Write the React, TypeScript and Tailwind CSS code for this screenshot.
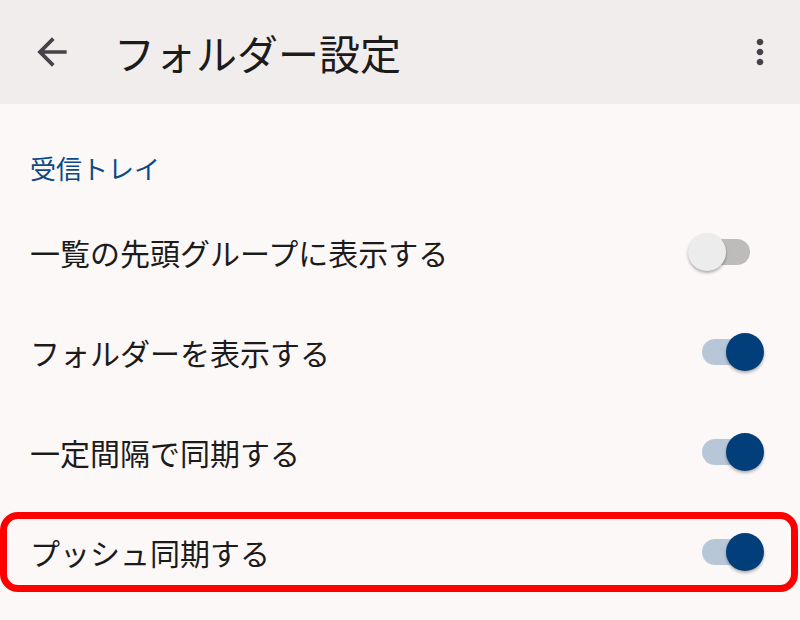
import React, { useState } from 'react';

const font = { fontFamily: '"Noto Sans CJK JP", "Noto Sans", sans-serif' };

interface Item {
  label: string;
  on: boolean;
  highlight?: boolean;
}

const initialItems: Item[] = [
  { label: '一覧の先頭グループに表示する', on: false },
  { label: 'フォルダーを表示する', on: true },
  { label: '一定間隔で同期する', on: true },
  { label: 'プッシュ同期する', on: true, highlight: true },
];

function Toggle({ on, onClick }: { on: boolean; onClick: () => void }) {
  return (
    <button type="button" onClick={onClick} className="relative h-[38px] w-[76px] shrink-0">
      <span
        className={`absolute left-[14px] top-[6px] h-[26px] w-[48px] rounded-full ${on ? 'bg-[#b7c7d8]' : 'bg-[#bdbcbb]'}`}
      />
      <span
        className={`absolute top-0 h-[38px] w-[38px] rounded-full shadow-[0_2px_3px_rgba(0,0,0,0.3)] ${on ? 'left-[38px] bg-[#023e7a]' : 'left-0 bg-[#ececec]'}`}
      />
    </button>
  );
}

export default function App() {
  const [items, setItems] = useState(initialItems);

  const toggle = (i: number) =>
    setItems((prev) => prev.map((it, idx) => (idx === i ? { ...it, on: !it.on } : it)));

  return (
    <div className="h-[620px] w-[800px] overflow-hidden bg-[#fcf8f8]" style={font}>
      {/* App bar */}
      <div className="flex h-[104px] items-center bg-[#f1eded] pl-[30px] pr-[20px]">
        <svg className="h-[44px] w-[44px] text-[#45424a]" viewBox="0 0 24 24" fill="currentColor">
          <path d="M20 11H7.83l5.59-5.59L12 4l-8 8 8 8 1.41-1.41L7.83 13H20v-2z" />
        </svg>
        <h1 className="ml-[40px] flex-1 text-[41px] leading-none text-[#1c1b1b]">フォルダー設定</h1>
        <svg className="h-[40px] w-[40px] text-[#45424a]" viewBox="0 0 24 24" fill="currentColor">
          <path d="M12 8c1.1 0 2-.9 2-2s-.9-2-2-2-2 .9-2 2 .9 2 2 2zm0 2c-1.1 0-2 .9-2 2s.9 2 2 2 2-.9 2-2-.9-2-2-2zm0 6c-1.1 0-2 .9-2 2s.9 2 2 2 2-.9 2-2-.9-2-2-2z" />
        </svg>
      </div>

      {/* Section header */}
      <div className="flex h-[98px] items-center px-[30px] pb-[14px] pt-[44px]">
        <span className="text-[26px] leading-none text-[#0b4a87]">受信トレイ</span>
      </div>

      {/* Rows */}
      <div>
        {items.map((it, i) => (
          <div key={it.label} className="relative flex h-[100px] items-center justify-between pl-[30px] pr-[36px]">
            <span className="text-[30px] leading-none text-[#1c1b1b]">{it.label}</span>
            <Toggle on={it.on} onClick={() => toggle(i)} />
            {it.highlight && (
              <div className="pointer-events-none absolute bottom-[10px] left-0 right-[2px] top-[10px] rounded-[18px] border-[7px] border-[#ff0000]" />
            )}
          </div>
        ))}
      </div>
    </div>
  );
}
